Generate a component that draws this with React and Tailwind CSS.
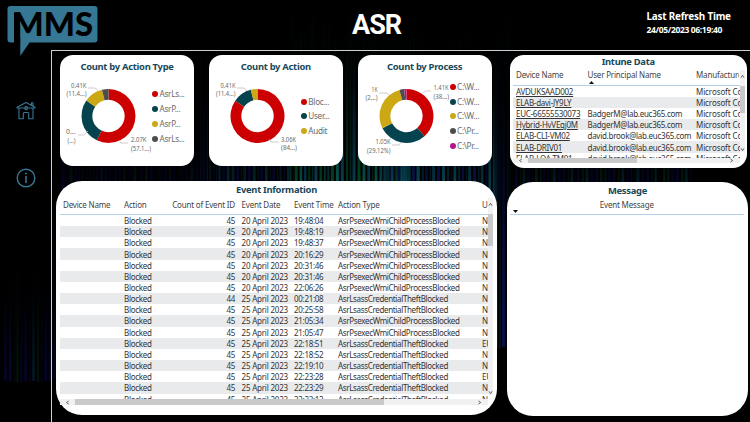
import React from "react";

const RED = "#cc0000";
const TEAL = "#05444f";
const GOLD = "#cba814";
const GREY = "#4d4d4d";
const PURPLE = "#b5158b";

const charts = [
  {
    title: "Count by Action Type",
    slices: [[57.1, RED], [27.6, TEAL], [11.4, GOLD], [3.9, GREY]],
    legend: [["AsrLs...", RED], ["AsrP...", TEAL], ["AsrP...", GOLD], ["AsrLs...", GREY]],
    labels: [
      [26.5, 12.5, "0.41K", "end", 15.5], [26.5, 21.3, "(11.4...)", "end", 20],
      [6, 59, "0...", "start", 9.5], [7.5, 67.5, "(...)", "start", 8],
      [71, 67, "2.07K", "start", 15.5], [71, 75.5, "(57.1...)", "start", 20],
    ],
    lines: ["28,13 35,13 38,15.5", "18,60 24,60 28,56", "68,68 61,68 59,65"],
  },
  {
    title: "Count by Action",
    slices: [[84.6, RED], [11.4, TEAL], [4, GOLD]],
    legend: [["Bloc...", RED], ["User...", TEAL], ["Audit", GOLD]],
    labels: [
      [26.5, 12.5, "0.41K", "end", 15], [26.5, 21.3, "(11.4...)", "end", 19.5],
      [72, 66.5, "3.06K", "start", 15], [72, 75.3, "(84...)", "start", 16],
    ],
    lines: ["28,13 35,13 38,16", "70,67 62,67 60,64"],
  },
  {
    title: "Count by Process",
    slices: [[38.4, RED], [29.1, TEAL], [28.3, GOLD], [2.9, GREY], [1.3, PURPLE]],
    legend: [["C:\\W...", RED], ["C:\\W...", TEAL], ["C:\\W...", GOLD], ["C:\\Pr...", GREY], ["C:\\Pr...", PURPLE]],
    labels: [
      [19.5, 16.8, "1K", "end", 6], [19.5, 25.3, "(2...)", "end", 12],
      [75.5, 15, "1.41K", "start", 15], [75.5, 24, "(38...)", "start", 15.5],
      [32.5, 69, "1.05K", "end", 15], [32.5, 78, "(29.12%)", "end", 23.5],
    ],
    lines: ["21,18 29,18 31,20", "73,16 67,16 65,18", "34,70 41,70 43,67"],
  },
];

function point(r, t) {
  const a = t * Math.PI * 2 - Math.PI / 2;
  return `${(48.5 + r * Math.cos(a)).toFixed(2)} ${(41 + r * Math.sin(a)).toFixed(2)}`;
}

function Donut({ chart }) {
  let start = 0;
  return (
    <svg width="92" height="84" className="shrink-0 overflow-visible">
      {chart.slices.map(([value, color], i) => {
        const a = start;
        const b = (start += value / 100);
        const big = b - a > 0.5 ? 1 : 0;
        return (
          <path
            key={i}
            fill={color}
            d={`M${point(27, a)} A27 27 0 ${big} 1 ${point(27, b)} L${point(16.2, b)} A16.2 16.2 0 ${big} 0 ${point(16.2, a)}Z`}
          />
        );
      })}
      {chart.lines.map((p) => (
        <polyline key={p} points={p} fill="none" stroke="#b8b8b8" strokeWidth="0.7" />
      ))}
      {chart.labels.map(([x, y, text, anchor, width], i) => (
        <text key={i} x={x} y={y} textAnchor={anchor} textLength={width} lengthAdjust="spacingAndGlyphs" fontSize="6.4" fill="#6a6a6a">
          {text}
        </text>
      ))}
    </svg>
  );
}

function ChartCard({ chart }) {
  return (
    <section className="flex h-[111px] w-[134px] flex-col rounded-[13px] bg-white pt-[4.5px]">
      <Title>{chart.title}</Title>
      <div className="mt-[2.5px] flex">
        <Donut chart={chart} />
        <ul className="flex h-[83px] flex-col justify-center whitespace-nowrap text-[8.2px] tracking-[-0.3px] text-[#6b6b6b]">
          {chart.legend.map(([name, color], i) => (
            <li key={i} className="flex h-[14.8px] items-center gap-[1.5px]">
              <svg width="6" height="6"><circle cx="3" cy="3" r="3" fill={color} /></svg>
              {name}
            </li>
          ))}
        </ul>
      </div>
    </section>
  );
}

function Title({ children }) {
  return (
    <h2 className="h-[13px] text-center text-[9.4px] leading-[13px] font-bold tracking-[-0.28px] whitespace-nowrap text-[#174858]">
      {children}
    </h2>
  );
}

function Arrow({ d }) {
  return (
    <svg width="5" height="5" viewBox="0 0 5 5" className="shrink-0">
      <path d={d} fill="none" stroke="#555" strokeWidth="0.9" />
    </svg>
  );
}
const UP = "M1 3.7 2.5 1.3 4 3.7";
const DOWN = "M1 1.3 2.5 3.7 4 1.3";
const LEFT = "M3.7 1 1.5 2.5 3.7 4";
const RIGHT = "M1.5 1 3.7 2.5 1.5 4";

const P = "AsrPsexecWmiChildProcessBlocked";
const L = "AsrLsassCredentialTheftBlocked";
const events = [
  [45, "20 April 2023", "19:48:04", P, "N"],
  [45, "20 April 2023", "19:48:19", P, "N"],
  [45, "20 April 2023", "19:48:37", P, "N"],
  [45, "20 April 2023", "20:16:29", P, "N"],
  [45, "20 April 2023", "20:31:46", P, "N"],
  [45, "20 April 2023", "20:31:46", P, "N"],
  [45, "20 April 2023", "22:06:26", P, "N"],
  [44, "25 April 2023", "00:21:08", L, "N"],
  [45, "25 April 2023", "20:25:58", L, "N"],
  [45, "25 April 2023", "21:05:34", P, "N"],
  [45, "25 April 2023", "21:05:47", P, "N"],
  [45, "25 April 2023", "22:18:51", L, "EU"],
  [45, "25 April 2023", "22:18:52", L, "N"],
  [45, "25 April 2023", "22:19:10", L, "N"],
  [45, "25 April 2023", "22:23:28", L, "EU"],
  [45, "25 April 2023", "22:23:29", L, "N"],
  [45, "25 April 2023", "22:23:12", L, "N"],
];
const eventCols = "grid grid-cols-[61px_48px_63px_6.5px_52.5px_44px_144px_20px] items-center pl-[3px] whitespace-nowrap";

function EventCard() {
  return (
    <section className="mt-[15px] ml-[4px] h-[234px] w-[441px] rounded-[26px] bg-white pt-[2px]">
      <Title>Event Information</Title>
      <div className="ml-[4px] flex">
        <div className="h-[203px] w-[427.5px] overflow-hidden text-[8px] tracking-[-0.3px] text-[#333]">
          <div className={`${eventCols} h-[19px] border-b border-[#b5d5e6] tracking-[-0.18px] text-[#444]`}>
            <span>Device Name</span><span>Action</span>
            <span className="flex justify-end">Count of Event ID</span><span />
            <span>Event Date</span><span>Event Time</span><span>Action Type</span><span>U</span>
          </div>
          {events.map(([count, date, time, type, user], i) => (
            <div key={i} className={`${eventCols} h-[11.17px] leading-[11px] ${i % 2 ? "bg-[#e9eaec]" : "bg-white"}`}>
              <span /><span>Blocked</span><span className="text-right">{count}</span><span />
              <span className="tracking-[-0.2px]">{date}</span><span>{time}</span><span className="tracking-[-0.34px]">{type}</span><span>{user}</span>
            </div>
          ))}
        </div>
        <div className="mt-[2px] flex h-[197px] w-[5px] flex-col items-center bg-[#f1f1f1] pt-[4px]">
          <Arrow d={UP} />
          <div className="mt-[7px] h-[32px] w-full bg-[#c9c9c9]" />
          <div className="mt-auto"><Arrow d={DOWN} /></div>
        </div>
      </div>
      <div className="ml-[4px] flex h-[6px] w-[427.5px] items-center bg-[#f1f1f1] pr-[6px] pl-[5px]">
        <Arrow d={LEFT} />
        <div className="ml-[5px] h-full w-[308.5px] bg-[#c9c9c9]" />
        <div className="ml-auto flex"><Arrow d={RIGHT} /></div>
      </div>
    </section>
  );
}

const devices = [
  ["AVDUKSAAD002", ""],
  ["ELAB-davi-JY9LY", ""],
  ["EUC-66555530073", "BadgerM@lab.euc365.com"],
  ["Hybrid-HvVEqj0M", "BadgerM@lab.euc365.com"],
  ["ELAB-CLI-VM02", "david.brook@lab.euc365.com"],
  ["ELAB-DRIV01", "david.brook@lab.euc365.com"],
  ["ELAB-LOA-TM01", "david.brook@lab.euc365.com"],
];
const deviceCols = "grid grid-cols-[71.5px_108.5px_60px] pl-[3.5px] whitespace-nowrap";

function IntuneCard() {
  return (
    <section className="ml-[3px] h-[113.5px] w-[236.5px] rounded-[14px] bg-white">
      <div className="-mt-[0.5px] h-[13.5px]"><Title>Intune Data</Title></div>
      <div className="ml-[2.5px] flex">
        <div className="h-[89.5px] w-[227px] overflow-hidden text-[8px] tracking-[-0.27px] text-[#333]">
          <div className={`${deviceCols} h-[17.5px] border-b border-[#b5cfea] pt-[1px] leading-[12px] tracking-[-0.18px] text-[#444]`}>
            <span>Device Name</span>
            <span className="flex flex-col">
              User Principal Name
              <svg width="5" height="3" className="ml-px"><path d="M0 3 2.5 0 5 3Z" fill="#111" /></svg>
            </span>
            <span className="w-[43px] overflow-hidden">Manufacture</span>
          </div>
          {devices.map(([name, user], i) => (
            <div key={name} className={`${deviceCols} h-[11.2px] items-center leading-[11px] ${i % 2 ? "bg-[#e9eaec]" : "bg-white"}`}>
              <span className="underline decoration-[0.8px] underline-offset-1">{name}</span>
              <span>{user}</span>
              <span className="tracking-[-0.1px]">Microsoft Corporation</span>
            </div>
          ))}
        </div>
        <div className="mt-[2px] flex h-[82px] w-[5px] flex-col items-center bg-[#f1f1f1] pt-[4px]">
          <Arrow d={UP} />
          <div className="mt-[7px] h-[27px] w-full bg-[#c9c9c9]" />
          <div className="mt-auto"><Arrow d={DOWN} /></div>
        </div>
      </div>
      <div className="ml-[2.5px] flex h-[5.5px] w-[227px] items-center bg-[#f1f1f1] pr-[6px] pl-[5px]">
        <Arrow d={LEFT} />
        <div className="ml-[5.5px] h-full w-[109px] bg-[#c9c9c9]" />
        <div className="ml-auto flex"><Arrow d={RIGHT} /></div>
      </div>
    </section>
  );
}

function MessageCard() {
  return (
    <section className="mt-[13.5px] h-[234px] w-[241px] rounded-[26px] bg-white pt-[2.5px]">
      <Title>Message</Title>
      <div className="mr-[4px] ml-[2.5px] h-[18px] border-b border-[#b5cfea] pt-[2px] text-center text-[8px] leading-[12px] tracking-[-0.18px] text-[#444]">
        Event Message
        <svg width="5" height="3" className="-mt-px ml-[3.5px] block"><path d="M0 0H5L2.5 3Z" fill="#111" /></svg>
      </div>
    </section>
  );
}

function Logo() {
  return (
    <svg width="100" height="60" className="block overflow-visible">
      <path d="M10.5 6H94.5Q97.5 6 97.5 9V39.5Q97.5 42.5 94.5 42.5H29.5L20.3 56V38L13.5 42.5H10.5Q7.5 42.5 7.5 39.5V9Q7.5 6 10.5 6Z" fill="#367794" />
      <path d="M14 12.5H20.2V42.5H14Z" fill="#000" />
      <text x="12.5" y="36" textLength="80.5" lengthAdjust="spacingAndGlyphs" fontFamily="Lato, sans-serif" fontWeight="900" fontSize="33" fill="#000">
        MMS
      </text>
    </svg>
  );
}

// Vertical light streaks: [x, width, top, bottom, colour, opacity]
const streaks = [];
function addStreaks(from, to, top, bottom, colors, strength) {
  for (let x = from, i = 0; x < to; i++) {
    const noise = Math.abs(Math.sin(x * 12.9898 + i * 4.1)) % 1;
    streaks.push([x, 1 + noise * 2, top + noise * 40, bottom - noise * 3, colors[i % colors.length], strength * (0.3 + noise * 0.7)]);
    x += 2 + noise * 3;
  }
}
addStreaks(4, 50, 240, 384, ["#0a0a50", "#0c0c60", "#063045", "#064018", "#09094a"], 0.45);
addStreaks(52, 62, 120, 380, ["#0a1060", "#0a3555"], 0.4);
addStreaks(62, 200, 90, 230, ["#08085a", "#0a0a40", "#04303f"], 0.6);
addStreaks(200, 290, 40, 220, ["#08304a", "#0a0a50", "#063a45"], 0.75);
addStreaks(290, 420, 0, 200, ["#045048", "#063a50", "#05401f"], 1);
addStreaks(380, 500, 20, 200, ["#064050", "#04303f", "#0a1045"], 1);
addStreaks(495, 511, 0, 350, ["#063a55", "#04304a", "#0a1045"], 1);
addStreaks(515, 690, 90, 220, ["#0a0a60", "#05421a", "#06405a", "#08084a"], 0.65);

function Backdrop() {
  return (
    <svg width="750" height="422" className="absolute inset-0" aria-hidden="true">
      <defs>
        <linearGradient id="fade" x1="0" x2="0" y1="0" y2="1">
          <stop offset="0" stopColor="#000" />
          <stop offset="0.3" stopColor="#000" stopOpacity="0.85" />
          <stop offset="1" stopColor="#000" stopOpacity="0" />
        </linearGradient>
      </defs>
      {streaks.map(([x, w, top, bottom, color, opacity], i) => (
        <g key={i}>
          <rect x={x} y={top} width={w} height={bottom - top} fill={color} opacity={opacity} />
          <rect x={x - 0.5} y={top - 1} width={w + 1} height={(bottom - top) * 0.9} fill="url(#fade)" />
        </g>
      ))}
    </svg>
  );
}

export default function App() {
  return (
    <div className="relative h-[422px] w-[750px] overflow-hidden bg-black font-['Noto_Sans','Open_Sans',sans-serif]">
      <Backdrop />
      <div className="relative flex h-full flex-col">
        <header className="flex h-[50px] shrink-0 items-start">
          <div className="w-[352px]"><Logo /></div>
          <h1 className="mt-[9px] w-[294.5px] font-[Roboto] text-[27px] leading-[32px] font-bold tracking-[-1px] text-white">ASR</h1>
          <div className="pt-[9px] whitespace-nowrap text-white">
            <p className="text-[9.9px] leading-[14px] font-bold tracking-[-0.2px]">Last Refresh Time</p>
            <p className="text-[8.5px] leading-[13px] font-bold tracking-[-0.35px]">24/05/2023 06:19:40</p>
          </div>
        </header>
        <div className="flex min-h-0 grow">
          <nav className="flex w-[51px] shrink-0 flex-col items-center gap-[47px] pt-[51px] text-[#367794]">
            <svg width="20" height="20" viewBox="0 0 20 20" fill="none" stroke="currentColor" strokeWidth="1.1" strokeLinejoin="round">
              <path d="M1 6.2 10 1.5 19 6.2V7H1ZM3 7V17.7H7.3V12.5Q7.3 11.5 8.3 11.5H11.7Q12.7 11.5 12.7 12.5V17.7H17V7M15.5 4V1.8H17V5" />
              <rect x="9" y="5.5" width="2.2" height="3.2" rx="0.8" />
            </svg>
            <svg width="20" height="20" viewBox="0 0 20 20" fill="none" stroke="currentColor" strokeWidth="1.4">
              <circle cx="10" cy="10" r="8.8" />
              <path d="M10 8V15" strokeWidth="1.6" />
              <circle cx="10" cy="5.5" r="1" fill="currentColor" stroke="none" />
            </svg>
          </nav>
          <main className="flex grow border-t border-l border-[#d0d0d0] pt-[4px]">
            <div className="w-[455px] shrink-0">
              <div className="ml-[8px] flex gap-[14.8px]">
                {charts.map((chart) => <ChartCard key={chart.title} chart={chart} />)}
              </div>
              <EventCard />
            </div>
            <div className="shrink-0">
              <IntuneCard />
              <MessageCard />
            </div>
          </main>
        </div>
      </div>
    </div>
  );
}
